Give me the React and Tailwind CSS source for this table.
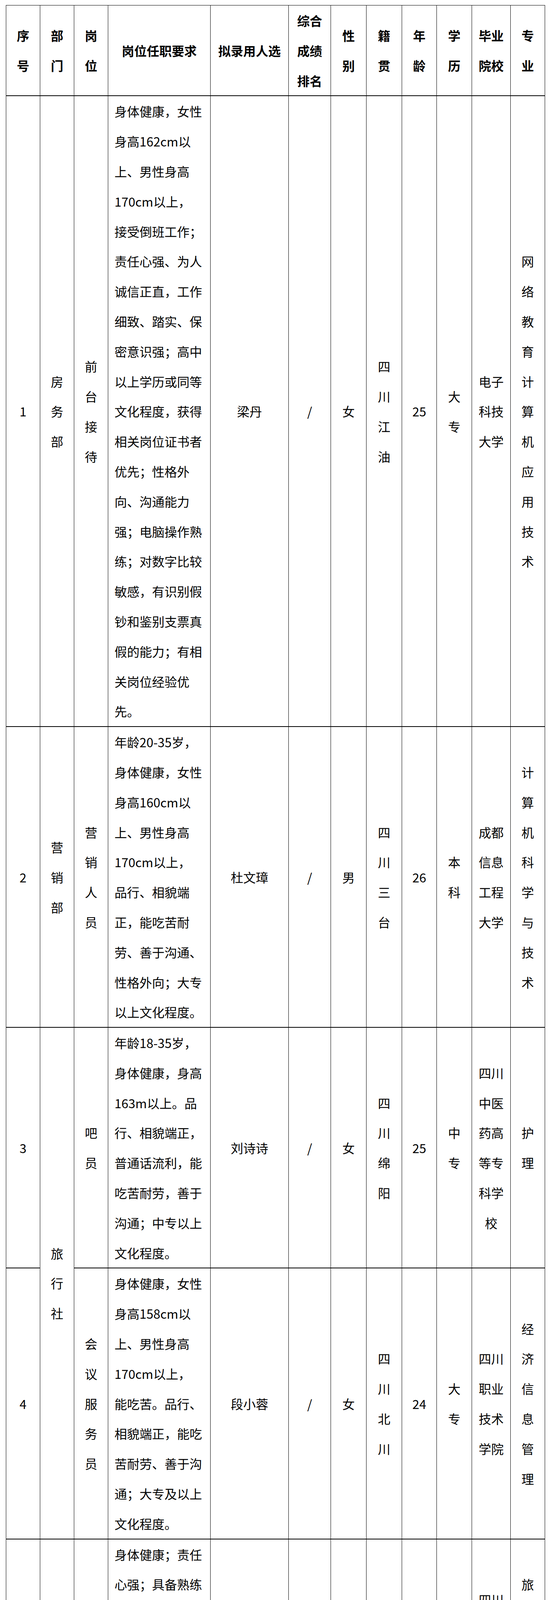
import React from "react";

const chars = (s) => s.split("");

const Lines = ({ lines }) => (
  <>
    {lines.map((l, i) => (
      <div key={i} className="whitespace-nowrap">
        {l}
      </div>
    ))}
  </>
);

const Td = ({ lines, rowSpan, left, head }) => (
  <td
    rowSpan={rowSpan}
    className={
      "border-r border-b-2 border-black align-middle p-0 " +
      (left ? "text-left pl-4 " : "text-center ") +
      (head ? "font-bold" : "")
    }
  >
    <Lines lines={lines} />
  </td>
);

const widths = [87, 87, 87, 262, 200, 108, 91, 91, 89, 90, 99, 88];

const header = [
  chars("序号"),
  chars("部门"),
  chars("岗位"),
  ["岗位任职要求"],
  ["拟录用人选"],
  ["综合", "成绩", "排名"],
  chars("性别"),
  chars("籍贯"),
  chars("年龄"),
  chars("学历"),
  ["毕业", "院校"],
  chars("专业"),
];

const req1 = [
  "身体健康，女性",
  "身高162cm以",
  "上、男性身高",
  "170cm以上，",
  "接受倒班工作；",
  "责任心强、为人",
  "诚信正直，工作",
  "细致、踏实、保",
  "密意识强；高中",
  "以上学历或同等",
  "文化程度，获得",
  "相关岗位证书者",
  "优先；性格外",
  "向、沟通能力",
  "强；电脑操作熟",
  "练；对数字比较",
  "敏感，有识别假",
  "钞和鉴别支票真",
  "假的能力；有相",
  "关岗位经验优",
  "先。",
];

const req2 = [
  "年龄20-35岁，",
  "身体健康，女性",
  "身高160cm以",
  "上、男性身高",
  "170cm以上，",
  "品行、相貌端",
  "正，能吃苦耐",
  "劳、善于沟通、",
  "性格外向；大专",
  "以上文化程度。",
];

const req3 = [
  "年龄18-35岁，",
  "身体健康，身高",
  "163m以上。品",
  "行、相貌端正，",
  "普通话流利，能",
  "吃苦耐劳，善于",
  "沟通；中专以上",
  "文化程度。",
];

const req4 = [
  "身体健康，女性",
  "身高158cm以",
  "上、男性身高",
  "170cm以上，",
  "能吃苦。品行、",
  "相貌端正，能吃",
  "苦耐劳、善于沟",
  "通；大专及以上",
  "文化程度。",
];

const req5 = [
  "身体健康；责任",
  "心强；具备熟练",
  "厨艺技能、良好",
  "的执行能力、沟",
  "通能力和领导能",
  "力，能够严格按",
  "照标准操作；对",
  "餐饮工作有较高",
  "的工作热情。",
];

const reqClean = [
  "性别不限，身体",
  "健康；责任心",
  "强，吃苦耐劳；",
  "具有团队合作精",
  "神。",
];

const reqWaiter = [
  "性别不限，身体",
  "健康，反应灵",
  "敏，速度快；踏",
  "实肯干，做事认",
  "真负责；服从管",
  "理，为人友好和",
  "善。",
];

// name, gender, origin, age, edu, school lines, major
const Tail = ({ name, sex, origin, age, edu, school, major }) => (
  <>
    <Td lines={[name]} />
    <Td lines={["/"]} />
    <Td lines={[sex]} />
    <Td lines={chars(origin)} />
    <Td lines={[age]} />
    <Td lines={chars(edu)} />
    <Td lines={school} />
    <Td lines={major} />
  </>
);

export default function App() {
  return (
    <div className="bg-white pt-[13px] pl-[15px] pb-[14px] text-black">
      <table className="table-fixed border-separate border-spacing-0 border-l border-t border-black w-[1379px] font-['Noto_Sans_CJK_SC',sans-serif] text-[32px] leading-[76.8px]">
        <colgroup>
          {widths.map((w, i) => (
            <col key={i} style={{ width: w }} />
          ))}
        </colgroup>
        <thead>
          <tr>
            {header.map((h, i) => (
              <Td key={i} lines={h} head />
            ))}
          </tr>
        </thead>
        <tbody>
          {/* 1 */}
          <tr>
            <Td lines={["1"]} />
            <Td lines={chars("房务部")} />
            <Td lines={chars("前台接待")} />
            <Td lines={req1} left />
            <Tail
              name="梁丹"
              sex="女"
              origin="四川江油"
              age="25"
              edu="大专"
              school={["电子", "科技", "大学"]}
              major={chars("网络教育计算机应用技术")}
            />
          </tr>
          {/* 2 */}
          <tr>
            <Td lines={["2"]} />
            <Td lines={chars("营销部")} />
            <Td lines={chars("营销人员")} />
            <Td lines={req2} left />
            <Tail
              name="杜文璋"
              sex="男"
              origin="四川三台"
              age="26"
              edu="本科"
              school={["成都", "信息", "工程", "大学"]}
              major={chars("计算机科学与技术")}
            />
          </tr>
          {/* 3 */}
          <tr>
            <Td lines={["3"]} />
            <Td lines={chars("旅行社")} rowSpan={2} />
            <Td lines={chars("吧员")} />
            <Td lines={req3} left />
            <Tail
              name="刘诗诗"
              sex="女"
              origin="四川绵阳"
              age="25"
              edu="中专"
              school={["四川", "中医", "药高", "等专", "科学", "校"]}
              major={chars("护理")}
            />
          </tr>
          {/* 4 */}
          <tr>
            <Td lines={["4"]} />
            <Td lines={chars("会议服务员")} />
            <Td lines={req4} left />
            <Tail
              name="段小蓉"
              sex="女"
              origin="四川北川"
              age="24"
              edu="大专"
              school={["四川", "职业", "技术", "学院"]}
              major={chars("经济信息管理")}
            />
          </tr>
          {/* 5 */}
          <tr>
            <Td lines={["5"]} />
            <Td lines={chars("餐饮部")} rowSpan={7} />
            <Td lines={chars("厨师")} />
            <Td lines={req5} left />
            <Tail
              name="那燕"
              sex="女"
              origin="四川绵阳"
              age="38"
              edu="中专"
              school={["四川", "广播", "电视", "中等", "专业", "学校"]}
              major={chars("旅游服务与管理")}
            />
          </tr>
          {/* 6 */}
          <tr>
            <Td lines={["6"]} />
            <Td lines={chars("保洁")} />
            <Td lines={reqClean} left rowSpan={2} />
            <Tail name="罗晓莉" sex="女" origin="四川剑阁" age="48" edu="初中" school={["/"]} major={["/"]} />
          </tr>
          {/* 7 */}
          <tr>
            <Td lines={["7"]} />
            <Td lines={chars("保洁")} />
            <Tail name="彭小艳" sex="女" origin="四川大英" age="50" edu="初中" school={["/"]} major={["/"]} />
          </tr>
          {/* 8 */}
          <tr>
            <Td lines={["8"]} />
            <Td lines={chars("服务员")} rowSpan={4} />
            <Td lines={reqWaiter} left rowSpan={4} />
            <Tail name="余冬艳" sex="女" origin="四川遂宁" age="34" edu="初中" school={["/"]} major={["/"]} />
          </tr>
          {/* 9 */}
          <tr>
            <Td lines={["9"]} />
            <Tail name="马小君" sex="女" origin="四川南部" age="42" edu="初中" school={["/"]} major={["/"]} />
          </tr>
          {/* 10 */}
          <tr>
            <Td lines={["10"]} />
            <Tail name="梁玉香" sex="女" origin="四川安县" age="40" edu="初中" school={["/"]} major={["/"]} />
          </tr>
          {/* 11 */}
          <tr>
            <Td lines={["11"]} />
            <Tail name="谭瑶" sex="女" origin="四川绵阳" age="38" edu="初中" school={["/"]} major={["/"]} />
          </tr>
        </tbody>
      </table>
    </div>
  );
}
